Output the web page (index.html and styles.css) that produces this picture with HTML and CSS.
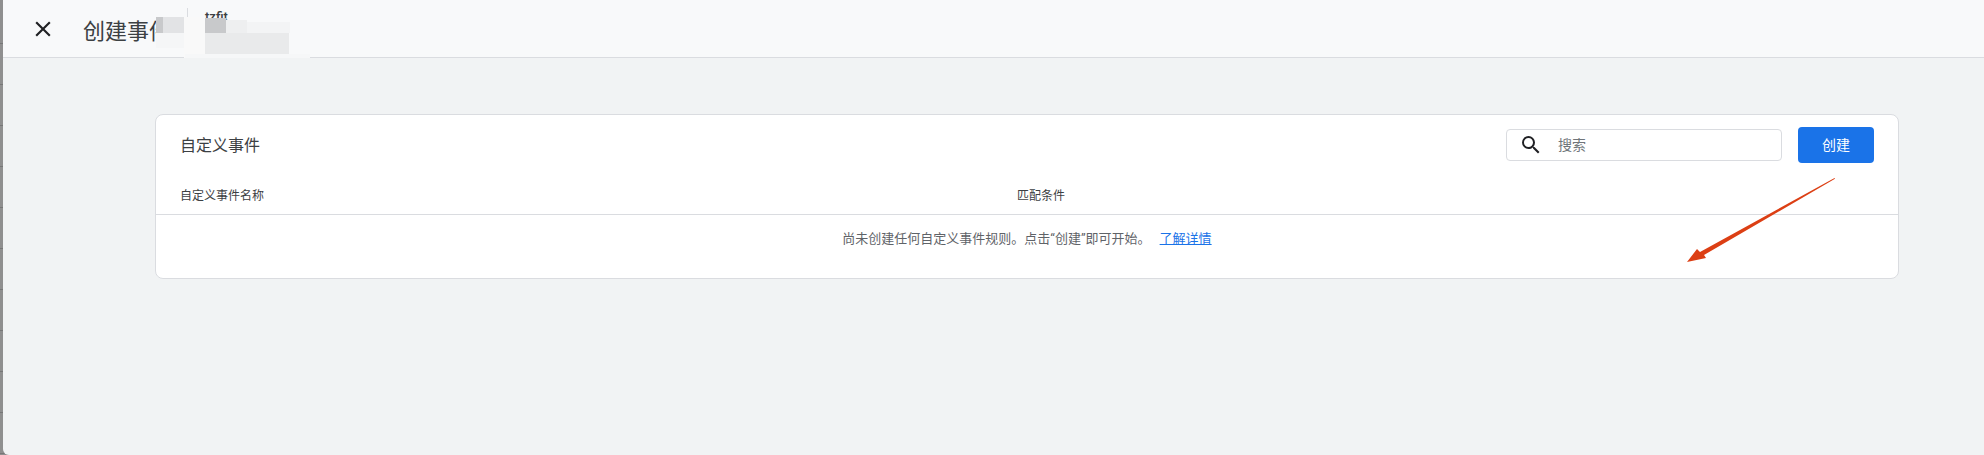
FILE: index.html
```html
<!DOCTYPE html>
<html lang="zh-CN">
<head>
    <meta charset="UTF-8">
    <meta name="viewport" content="width=device-width, initial-scale=1.0">
    <title>创建事件</title>
    <link rel="stylesheet" href="styles.css">
</head>
<body>
    <div class="page">
        <header class="top-bar">
            <button class="close-btn" type="button" aria-label="关闭">
                <svg width="26" height="26" viewBox="0 0 24 24"><path d="M19 6.41 17.59 5 12 10.59 6.41 5 5 6.41 10.59 12 5 17.59 6.41 19 12 13.41 17.59 19 19 17.59 13.41 12z"/></svg>
            </button>
            <h1 class="page-title">创建事件</h1>
            <span class="account-name">tzfit</span>
        </header>

        <!-- 打码区域 -->
        <div class="mask mask-low-left"></div>
        <div class="mask mask-dark-left"></div>
        <div class="mask mask-mid-left"></div>
        <div class="mask mask-white"></div>
        <div class="mask mask-low-right"></div>
        <div class="mask mask-band"></div>
        <div class="mask mask-dark-right"></div>
        <div class="mask mask-fade-a"></div>
        <div class="mask mask-fade-b"></div>
        <span class="bar-sep"></span>

        <main class="content">
            <section class="card">
                <div class="card-head">
                    <h2 class="card-title">自定义事件</h2>
                    <div class="search-box">
                        <svg class="search-icon" width="24" height="24" viewBox="0 0 24 24"><path d="M15.5 14h-.79l-.28-.27A6.47 6.47 0 0 0 16 9.5 6.5 6.5 0 1 0 9.5 16c1.61 0 3.09-.59 4.23-1.57l.27.28v.79l5 4.99L20.49 19l-4.99-5zm-6 0C7.01 14 5 11.99 5 9.5S7.01 5 9.5 5 14 7.01 14 9.5 11.99 14 9.5 14z"/></svg>
                        <span class="search-text">搜索</span>
                    </div>
                    <button class="create-btn" type="button">创建</button>
                </div>
                <div class="table-head">
                    <div class="col-name">自定义事件名称</div>
                    <div class="col-rule">匹配条件</div>
                </div>
                <div class="empty-row">
                    尚未创建任何自定义事件规则。点击“创建”即可开始。<a class="more-link" href="#">了解详情</a>
                </div>
            </section>
        </main>

        <svg class="arrow" width="150" height="88" viewBox="0 0 150 88">
            <path d="M147.5 0 L148 .7 L17 77 L19 80 L0 84 L10 71 L13 74 Z" fill="#dc3f14"/>
        </svg>
    </div>
</body>
</html>
```

FILE: styles.css
```css
* {
    box-sizing: border-box;
}
html, body {
    margin: 0;
    padding: 0;
    height: 100%;
    overflow: hidden;
}
body {
    background: repeating-linear-gradient(#8f8f8f 0 40px, #777 40px 41px) 0 3px;
    font-family: Roboto, "Noto Sans CJK SC", sans-serif;
    color: #3c4043;
}
.page {
    position: relative;
    height: 455px;
    margin-left: 3px;
    background-color: #f1f3f4;
    border-bottom-left-radius: 6px;
    overflow: hidden;
}
.top-bar {
    display: flex;
    align-items: center;
    height: 58px;
    background-color: #f8f9fa;
    border-bottom: 1px solid #dadce0;
}
.close-btn {
    display: flex;
    margin-left: 27px;
    padding: 0;
    border: none;
    background: none;
    cursor: pointer;
}
.close-btn svg {
    fill: #202124;
}
.page-title {
    margin: 0 0 0 27px;
    font-size: 22px;
    font-weight: 400;
    color: #3c4043;
}
.account-name {
    align-self: flex-start;
    margin: 9px 0 0 34px;
    font-size: 13px;
    font-weight: 500;
    color: #3c4043;
}
.bar-sep {
    position: absolute;
    left: 184px;
    top: 8px;
    width: 1px;
    height: 9px;
    background-color: #dadce0;
}
.mask {
    position: absolute;
}
.mask-low-left {
    left: 153px;
    top: 33px;
    width: 29px;
    height: 15px;
    background-color: #f5f6f7;
}
.mask-dark-left {
    left: 153px;
    top: 17px;
    width: 7px;
    height: 16px;
    background-color: #c8c9cb;
}
.mask-mid-left {
    left: 160px;
    top: 17px;
    width: 21px;
    height: 16px;
    background-color: #e2e3e5;
}
.mask-white {
    left: 181px;
    top: 17px;
    width: 21px;
    height: 41px;
    background-color: #f9f9f9;
}
.mask-low-right {
    left: 202px;
    top: 33px;
    width: 84px;
    height: 21px;
    background-color: #e9eaeb;
}
.mask-band {
    left: 182px;
    top: 54px;
    width: 125px;
    height: 4px;
    background-color: #f6f7f8;
}
.mask-dark-right {
    left: 202px;
    top: 18px;
    width: 21px;
    height: 15px;
    background-color: #c8c9cb;
}
.mask-fade-a {
    left: 223px;
    top: 20px;
    width: 21px;
    height: 13px;
    background-color: #eeeff0;
}
.mask-fade-b {
    left: 244px;
    top: 22px;
    width: 43px;
    height: 11px;
    background-color: #f3f4f5;
}
.content {
    padding: 56px 85px 0 152px;
}
.card {
    height: 165px;
    background-color: #fff;
    border: 1px solid #dadce0;
    border-radius: 8px;
}
.card-head {
    display: flex;
    align-items: center;
    height: 48px;
    margin-top: 6px;
    padding: 0 24px 0 24px;
}
.card-title {
    flex: 1;
    margin: 0 0 3px;
    font-size: 16px;
    font-weight: 400;
    color: #3c4043;
}
.search-box {
    display: flex;
    align-items: center;
    width: 276px;
    height: 32px;
    padding-left: 12px;
    border: 1px solid #dadce0;
    border-radius: 4px;
}
.search-icon {
    fill: #202124;
}
.search-text {
    margin-left: 15px;
    margin-bottom: 2px;
    font-size: 14px;
    color: #70757a;
}
.create-btn {
    width: 76px;
    height: 36px;
    margin-left: 16px;
    padding: 0 0 2px;
    border: none;
    border-radius: 4px;
    background-color: #1a73e8;
    color: #fff;
    font-family: inherit;
    font-size: 14px;
    cursor: pointer;
}
.table-head {
    display: flex;
    align-items: center;
    height: 46px;
    padding-top: 5px;
    padding-left: 24px;
    border-bottom: 1px solid #dadce0;
    font-size: 12px;
    color: #3c4043;
}
.col-name {
    width: 837px;
}
.empty-row {
    padding-top: 13px;
    text-align: center;
    font-size: 13px;
    color: #5f6368;
}
.more-link {
    margin-left: 9px;
    color: #1a73e8;
    text-decoration: underline;
}
.arrow {
    position: absolute;
    left: 1684px;
    top: 178px;
}
```
